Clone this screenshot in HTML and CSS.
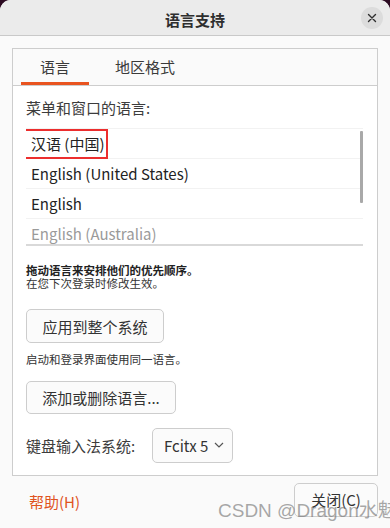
FILE: index.html
```html
<!DOCTYPE html>
<html lang="zh-CN">
<head>
<meta charset="utf-8">
<title>语言支持</title>
<link rel="stylesheet" href="styles.css">
</head>
<body>
<div class="window">
  <header class="titlebar">
    <span class="title">语言支持</span>
    <button class="close" aria-label="关闭">
      <svg width="10" height="10" viewBox="0 0 10 10"><path d="M1.5 1.5 L8.5 8.5 M8.5 1.5 L1.5 8.5" stroke="#2e2e2e" stroke-width="1.4" fill="none" stroke-linecap="round"/></svg>
    </button>
  </header>
  <main class="content">
    <section class="notebook">
      <nav class="tabs">
        <span class="tab active">语言</span>
        <span class="tab">地区格式</span>
      </nav>
      <div class="page">
        <p class="label">菜单和窗口的语言:</p>
        <div class="list">
          <ul class="rows">
            <li class="row">汉语 (中国)</li>
            <li class="row">English (United States)</li>
            <li class="row">English</li>
            <li class="row faded">English (Australia)</li>
          </ul>
          <div class="scrollbar"></div>
          <div class="mark"></div>
        </div>
        <p class="hint bold">拖动语言来安排他们的优先顺序。</p>
        <p class="hint">在您下次登录时修改生效。</p>
        <button class="btn apply">应用到整个系统</button>
        <p class="hint second">启动和登录界面使用同一语言。</p>
        <button class="btn add">添加或删除语言...</button>
        <div class="im-row">
          <span class="im-label">键盘输入法系统:</span>
          <button class="combo">Fcitx 5
            <svg width="10" height="6" viewBox="0 0 10 6"><path d="M1 1 L5 5 L9 1" stroke="#555" stroke-width="1.2" fill="none"/></svg>
          </button>
        </div>
      </div>
    </section>
    <footer class="footer">
      <span class="help">帮助(H)</span>
      <button class="btn closebtn">关闭(C)</button>
    </footer>
  </main>
  <div class="watermark">CSDN @Dragon水魅</div>
</div>
</body>
</html>
```
FILE: styles.css
```css
* { box-sizing: border-box; }
html, body {
  margin: 0;
  padding: 0;
  background: #2c0a22;
  width: 390px;
  height: 528px;
  overflow: hidden;
}
body {
  font-family: "Noto Sans CJK SC", "Noto Sans", sans-serif;
  color: #333;
}
.window {
  position: relative;
  width: 390px;
  height: 528px;
  background: #fafafa;
  border-radius: 11px 11px 0 0;
  overflow: hidden;
}
.titlebar {
  height: 36px;
  background: #ebebeb;
  border-bottom: 1px solid #c9c9c9;
  display: flex;
  align-items: center;
  justify-content: center;
  position: relative;
}
.title {
  font-size: 15px;
  font-weight: bold;
  color: #2e2e2e;
  margin-top: 3px;
}
.close {
  position: absolute;
  right: 7px;
  top: 7px;
  width: 22px;
  height: 22px;
  border-radius: 50%;
  border: none;
  background: #dcdcdc;
  padding: 0;
  display: flex;
  align-items: center;
  justify-content: center;
}
.content {
  padding: 12px 12px 0 12px;
}
.notebook {
  border: 1px solid #cdcdcd;
  background: #ffffff;
}
.tabs {
  height: 37px;
  display: flex;
  gap: 7px;
  padding-left: 8px;
  background: #fafafa;
  border-bottom: 1px solid #cdcdcd;
}
.tab {
  font-size: 15px;
  color: #3a3a3a;
  padding: 0 19px;
  display: flex;
  align-items: center;
  padding-top: 2px;
  border-bottom: 3px solid transparent;
}
.tab.active {
  border-bottom-color: #e95420;
}
.page {
  padding: 13px 13px 12px 13px;
}
.label {
  margin: 0;
  font-size: 15px;
  line-height: 18px;
  color: #3c3c3c;
}
.list {
  position: relative;
  margin-top: 11px;
  width: 337px;
  height: 118px;
  border-top: 1px solid #f2f2f2;
  border-bottom: 2px solid #d9d9d9;
  overflow: hidden;
}
.rows {
  list-style: none;
  margin: 0;
  padding: 0;
}
.row {
  height: 30px;
  line-height: 29px;
  padding-left: 5px;
  font-size: 15px;
  color: #222;
  border-bottom: 1px solid #f2f2f2;
}
.row.faded { color: #9a9a9a; }
.scrollbar {
  position: absolute;
  right: 0;
  top: 2px;
  width: 3px;
  height: 72px;
  background: #a9a9a9;
  border-radius: 1px;
}
.mark {
  position: absolute;
  left: -6px;
  top: 0px;
  width: 88px;
  height: 30px;
  border: 2px solid #ec2e2e;
}
.hint {
  margin: 0;
  font-size: 11.5px;
  line-height: 12.5px;
  color: #333;
}
.hint.bold {
  font-weight: bold;
  margin-top: 18px;
  color: #222;
}
.btn {
  display: block;
  font-family: inherit;
  font-size: 15px;
  color: #333;
  background: #fbfbfb;
  border: 1px solid #cdcdcd;
  border-radius: 5px;
  height: 34px;
  padding: 0;
}
.apply { width: 138px; margin-top: 20px; }
.hint.second { margin-top: 10px; }
.add { width: 150px; margin-top: 15px; height: 33px; }
.im-row {
  display: flex;
  align-items: center;
  margin-top: 14px;
  gap: 14px;
}
.im-label {
  font-size: 15px;
  color: #3c3c3c;
  width: 112px;
}
.combo {
  width: 81px;
  height: 35px;
  font-family: inherit;
  font-size: 15px;
  color: #333;
  background: #fbfbfb;
  border: 1px solid #cdcdcd;
  border-radius: 5px;
  display: flex;
  align-items: center;
  gap: 6px;
  padding: 0 0 0 11px;
}
.footer {
  display: flex;
  justify-content: space-between;
  align-items: flex-start;
  padding: 7px 0 0 17px;
}
.help {
  color: #e0541f;
  font-size: 15px;
  margin-top: 8px;
}
.closebtn {
  width: 84px;
  height: 34px;
  font-size: 15px;
}
.watermark {
  position: absolute;
  left: 218px;
  top: 495px;
  font-family: "Liberation Sans", "Noto Sans CJK SC", sans-serif;
  font-size: 19px;
  color: rgba(110, 110, 110, 0.6);
  white-space: nowrap;
}
```
